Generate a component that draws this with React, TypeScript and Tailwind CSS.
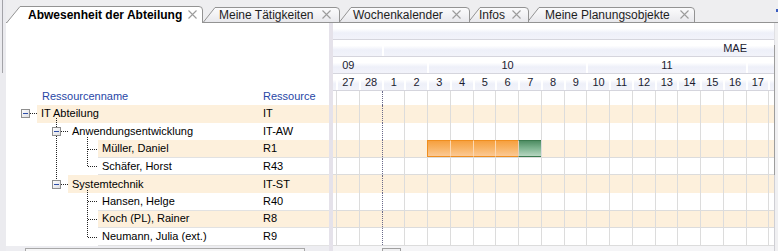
import React from "react";

const W = 22.75;
const BAND =
  "bg-[linear-gradient(to_bottom,#ffffff_0%,#ffffff_35%,#eef0f9_62%,#f2f3fa_100%)]";

type Row = {
  name: string;
  res: string;
  lvl: number;
  hl?: boolean;
  leaf?: boolean;
  bar?: boolean;
};

const ROWS: Row[] = [
  { name: "IT Abteilung", res: "IT", lvl: 0, hl: true },
  { name: "Anwendungsentwicklung", res: "IT-AW", lvl: 1 },
  { name: "Müller, Daniel", res: "R1", lvl: 2, hl: true, leaf: true, bar: true },
  { name: "Schäfer, Horst", res: "R43", lvl: 2, leaf: true },
  { name: "Systemtechnik", res: "IT-ST", lvl: 1, hl: true },
  { name: "Hansen, Helge", res: "R40", lvl: 2, leaf: true },
  { name: "Koch (PL), Rainer", res: "R8", lvl: 2, hl: true, leaf: true },
  { name: "Neumann, Julia (ext.)", res: "R9", lvl: 2, leaf: true },
];

const INDENT = ["pl-[31px]", "pl-[62px]", "pl-[92px]"];

type Day = { d: number; wk: number; m: number };
const DAYS: Day[] = Array.from({ length: 59 }, (_, i) => ({
  d: i < 28 ? i + 1 : i - 27,
  m: i < 28 ? 1 : 2,
  wk: 5 + Math.floor((i + 5) / 7),
}));

function groups(key: (d: Day) => number) {
  const out: { k: number; n: number }[] = [];
  DAYS.forEach((d) => {
    const k = key(d);
    if (out.length && out[out.length - 1].k === k) out[out.length - 1].n++;
    else out.push({ k, n: 1 });
  });
  return out;
}
const MONTHS = groups((d) => d.m);
const WEEKS = groups((d) => d.wk);
const MONTH_LABEL: Record<number, string> = { 1: "FEB", 2: "MAE" };

type TabDef = {
  label: string;
  w: number;
  h: number;
  cls: string;
  pl: string;
  pr: string;
  z: string;
  active?: boolean;
};

const TABS: TabDef[] = [
  { label: "Abwesenheit der Abteilung", w: 197, h: 17, cls: "w-[197px] h-[17px] -mb-px", pl: "pl-[22px]", pr: "pr-[6px]", z: "z-30", active: true },
  { label: "Meine Tätigkeiten", w: 137, h: 15, cls: "w-[137px] h-[15px]", pl: "pl-[16px]", pr: "pr-[9px]", z: "z-[14]" },
  { label: "Wochenkalender", w: 131, h: 15, cls: "w-[131px] h-[15px] -ml-px", pl: "pl-[14px]", pr: "pr-[9px]", z: "z-[13]" },
  { label: "Infos", w: 61, h: 15, cls: "w-[61px] h-[15px] -ml-[2px]", pl: "pl-[11px]", pr: "pr-[8px]", z: "z-[12]" },
  { label: "Meine Planungsobjekte", w: 168, h: 15, cls: "w-[168px] h-[15px] -ml-[2px]", pl: "pl-[18px]", pr: "pr-[6px]", z: "z-[11]" },
];

function TabShape({ w, h, active }: { w: number; h: number; active?: boolean }) {
  const s = active ? 14 : 12;
  const d = `M0.5 ${h} L${s} 0.5 L${w - 4} 0.5 Q${w - 0.5} 0.5 ${w - 0.5} 4 L${w - 0.5} ${h}`;
  const id = `tg${w}`;
  return (
    <svg className="absolute inset-0" width={w} height={h} viewBox={`0 0 ${w} ${h}`}>
      <defs>
        <linearGradient id={id} x1="0" y1="0" x2="0" y2="1">
          <stop offset="0" stopColor="#fcfcfd" />
          <stop offset="1" stopColor="#e8e8ec" />
        </linearGradient>
      </defs>
      <path d={d + " Z"} fill={active ? "#ffffff" : `url(#${id})`} />
      <path d={d} fill="none" stroke="#939393" />
    </svg>
  );
}

function CloseX() {
  return (
    <svg width="9" height="9" viewBox="0 0 9 9" className="shrink-0">
      <path d="M0.5 0.5 L8.5 8.5 M8.5 0.5 L0.5 8.5" stroke="#9c9c9c" strokeWidth="1.1" />
    </svg>
  );
}

function TabStrip() {
  return (
    <div className="h-[23px] flex items-end border-b border-[#939393] bg-[#eeeef0]">
      {TABS.map((t) => (
        <div key={t.label} className={`relative shrink-0 ${t.cls} ${t.z}`}>
          <TabShape w={t.w} h={t.h} active={t.active} />
          <div className={`relative h-full flex items-center ${t.pl} ${t.pr} text-[12px] whitespace-nowrap`}>
            <span className={t.active ? "font-bold text-black" : "text-[#1e1e1e]"}>{t.label}</span>
            <span className="ml-auto flex">
              <CloseX />
            </span>
          </div>
        </div>
      ))}
      <div className="ml-auto mb-[10px] w-[2px] h-[3px] bg-[#3a5cc0]" />
    </div>
  );
}

function Box({ x, y }: { x: number; y: number }) {
  return (
    <g>
      <rect x={x + 0.5} y={y + 0.5} width="8" height="8" fill="url(#boxg)" stroke="#8e8e8e" />
      <rect x={x + 2} y={y + 4} width="5" height="1" fill="#2e4ea8" />
    </g>
  );
}

function TreeLines() {
  const dot = { stroke: "#222", strokeDasharray: "1 1", strokeWidth: 1 } as const;
  return (
    <svg className="absolute left-0 top-0 pointer-events-none" width="323" height="141" viewBox="0 0 323 141" shapeRendering="crispEdges">
      <defs>
        <linearGradient id="boxg" x1="0" y1="0" x2="1" y2="1">
          <stop offset="0" stopColor="#ffffff" />
          <stop offset="1" stopColor="#dcdce0" />
        </linearGradient>
      </defs>
      <line x1="24" y1="8.5" x2="31" y2="8.5" {...dot} />
      <line x1="50.5" y1="13" x2="50.5" y2="75" {...dot} />
      <line x1="55" y1="26.5" x2="62" y2="26.5" {...dot} />
      <line x1="55" y1="79.5" x2="62" y2="79.5" {...dot} />
      <line x1="81.5" y1="32" x2="81.5" y2="62" {...dot} />
      <line x1="82" y1="44.5" x2="92" y2="44.5" {...dot} />
      <line x1="82" y1="61.5" x2="92" y2="61.5" {...dot} />
      <line x1="81.5" y1="85" x2="81.5" y2="133" {...dot} />
      <line x1="82" y1="96.5" x2="92" y2="96.5" {...dot} />
      <line x1="82" y1="114.5" x2="92" y2="114.5" {...dot} />
      <line x1="82" y1="132.5" x2="92" y2="132.5" {...dot} />
      <Box x={15} y={4} />
      <Box x={46} y={22} />
      <Box x={46} y={75} />
    </svg>
  );
}

function TreePanel() {
  return (
    <div className="w-[323px] shrink-0 flex flex-col bg-white">
      <div className="h-[65px] shrink-0" />
      <div className="h-[17px] shrink-0 flex items-center pl-[36px] text-[#2746a6]">
        <span className="w-[221px]">Ressourcenname</span>
        <span>Ressource</span>
      </div>
      <div className="relative h-[140.8px] shrink-0">
        {ROWS.map((r) => (
          <div key={r.name} className={`flex h-[17.6px] ${INDENT[r.lvl]}`}>
            <div
              className={`flex-1 flex items-center ${r.hl ? "bg-[#fdf0dc]" : ""} ${
                r.leaf ? "border-b border-[#e2e2e2]" : ""
              }`}
            >
              <span className="flex-1 pl-[4px] whitespace-nowrap">{r.name}</span>
              <span className="w-[66px]">{r.res}</span>
            </div>
          </div>
        ))}
        <TreeLines />
      </div>
      <div className="flex-1 bg-[#ededf1]">
        <div className="ml-[19px] mt-[2px] w-[280px] h-[4px] border border-b-0 border-[#a8a8a8] bg-[#f6f6f7]" />
      </div>
    </div>
  );
}

function Cells({ bar }: { bar?: boolean }) {
  return (
    <>
      {DAYS.map((_, i) => {
        let cls = "border-l border-[#dcdcdc]";
        if (i === 28) cls = "border-l border-dotted border-[#6a6a8a]";
        if (bar && i >= 30 && i <= 33)
          cls =
            "border-l border-y border-y-[#ef8e1f] bg-[linear-gradient(to_bottom,#f6a040_0%,#f8b262_45%,#fbc995_100%)] " +
            (i === 30 ? "border-l-[#ef8e1f]" : "border-l-[#fcd9b4]");
        if (bar && i === 34)
          cls =
            "border-l border-y border-y-[#3c7a4f] border-l-[#e8cfb8] bg-[linear-gradient(to_bottom,#4f8d63_0%,#80b592_50%,#b7d6c1_100%)]";
        return <div key={i} className={`w-[22.75px] shrink-0 ${cls}`} />;
      })}
    </>
  );
}

function Gantt() {
  return (
    <div className="w-[441px] shrink-0 flex flex-col overflow-hidden bg-white">
      <div className="ml-[-588.5px] w-[1342.25px] shrink-0 flex flex-col text-[#1b1b30]">
        <div className={`h-[17px] shrink-0 border-b border-[#d5d5dd] ${BAND}`} />
        <div className="h-[17px] shrink-0 border-b border-[#d5d5dd] flex">
          {MONTHS.map((m) => (
            <div
              key={m.k}
              style={{ width: m.n * W }}
              className={`shrink-0 border-l-2 border-white flex items-center justify-center ${BAND}`}
            >
              {MONTH_LABEL[m.k]}
            </div>
          ))}
        </div>
        <div className="h-[17px] shrink-0 border-b border-[#d5d5dd] flex">
          {WEEKS.map((w) => (
            <div
              key={w.k}
              style={{ width: w.n * W }}
              className={`shrink-0 border-l-2 border-white flex items-center justify-center ${BAND}`}
            >
              {String(w.k).padStart(2, "0")}
            </div>
          ))}
        </div>
        <div className="h-[17px] shrink-0 border-b border-[#d5d5dd] flex">
          {DAYS.map((d, i) => (
            <div
              key={i}
              className={`w-[22.75px] shrink-0 border-l-2 border-white flex items-center justify-center ${BAND}`}
            >
              {d.d}
            </div>
          ))}
        </div>
        <div className="h-[14px] shrink-0 flex">
          <Cells />
        </div>
        {ROWS.map((r) => (
          <div
            key={r.name}
            className={`h-[17.6px] shrink-0 flex ${r.hl ? "bg-[#fdf0dc]" : ""} ${
              r.leaf ? "border-b border-[#dcdcdc]" : ""
            }`}
          >
            <Cells bar={r.bar} />
          </div>
        ))}
      </div>
      <div className="flex-1 bg-[#f5f5f7]">
        <div className="ml-[49px] mt-[2px] w-[19px] h-[4px] border border-b-0 border-[#a0a0a0] bg-[#f0f0f2]" />
      </div>
    </div>
  );
}

function RightScroll() {
  return (
    <div className="w-[4px] shrink-0 flex flex-col bg-[#f0f0f2]">
      <div className="h-[22px] shrink-0 border-l border-[#e0e0e4]" />
      <div className="h-[130px] shrink-0 border-l border-[#9d9d9d]" />
      <div className="flex-1 border-l border-[#cfcfd4]" />
    </div>
  );
}

export default function App() {
  return (
    <div className="w-[778px] h-[251px] overflow-hidden flex bg-[#ebebef] font-['Liberation_Sans',Arial,sans-serif] text-[11px] text-black leading-none">
      <div className="w-[6px] shrink-0">
        <div className="ml-[2px] w-px h-[73px] bg-[#a3a3a8]" />
      </div>
      <div className="w-[772px] shrink-0 flex flex-col">
        <TabStrip />
        <div className="flex h-[228px]">
          <TreePanel />
          <div className="w-[4px] shrink-0 bg-[#e5e2ea]" />
          <Gantt />
          <RightScroll />
        </div>
      </div>
    </div>
  );
}
